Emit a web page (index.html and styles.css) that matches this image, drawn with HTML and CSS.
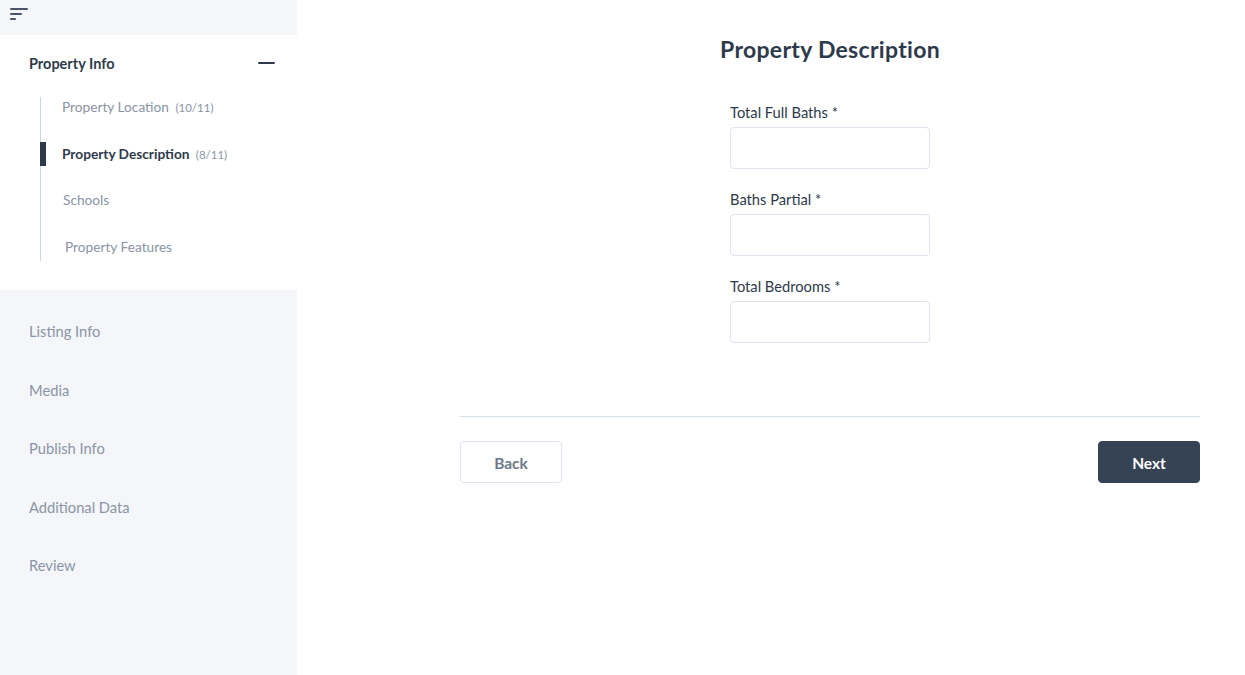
FILE: index.html
```html
<!DOCTYPE html>
<html lang="en">
<head>
<meta charset="utf-8">
<title>Property Description</title>
<link rel="stylesheet" href="styles.css">
</head>
<body>
<div class="app">
  <aside class="sidebar">
    <div class="topbar">
      <svg class="menu-icon" width="20" height="14" viewBox="0 0 20 14">
        <rect x="0" y="1" width="18" height="2" rx="1" fill="#4a5568"/>
        <rect x="0" y="6" width="12" height="2" rx="1" fill="#4a5568"/>
        <rect x="0" y="11" width="6" height="2" rx="1" fill="#4a5568"/>
      </svg>
    </div>
    <div class="open-section">
      <div class="section-head">
        <span class="section-title">Property Info</span>
        <span class="minus"></span>
      </div>
      <ul class="sub-list">
        <li class="sub-item">Property Location <span class="count">(10/11)</span></li>
        <li class="sub-item active">Property Description <span class="count">(8/11)</span></li>
        <li class="sub-item schools">Schools</li>
        <li class="sub-item features">Property Features</li>
      </ul>
    </div>
    <ul class="main-nav">
      <li>Listing Info</li>
      <li>Media</li>
      <li>Publish Info</li>
      <li>Additional Data</li>
      <li>Review</li>
    </ul>
  </aside>
  <main class="content">
    <div class="container">
      <h1 class="page-title">Property Description</h1>
      <form class="form">
        <div class="field">
          <label class="label">Total Full Baths *</label>
          <input class="input" type="text">
        </div>
        <div class="field">
          <label class="label">Baths Partial *</label>
          <input class="input" type="text">
        </div>
        <div class="field">
          <label class="label">Total Bedrooms *</label>
          <input class="input" type="text">
        </div>
      </form>
      <div class="divider"></div>
      <div class="actions">
        <button class="btn btn-back" type="button">Back</button>
        <button class="btn btn-next" type="button">Next</button>
      </div>
    </div>
  </main>
</div>
</body>
</html>
```

FILE: styles.css
```css
* { box-sizing: border-box; }
html, body { margin: 0; padding: 0; height: 100%; }
body {
  font-family: "Lato", "Open Sans", sans-serif;
  color: #2e3a4b;
  background: #fff;
}
.app {
  display: flex;
  height: 675px;
}
.sidebar {
  width: 297px;
  flex: 0 0 297px;
  background: #f4f6fa;
  display: flex;
  flex-direction: column;
}
.topbar {
  height: 35px;
  padding: 7px 0 0 10px;
}
.menu-icon { display: block; }
.open-section {
  background: #fff;
  height: 255px;
  padding-top: 14px;
}
.section-head {
  display: flex;
  align-items: center;
  justify-content: space-between;
  height: 28px;
  padding: 0 22px 0 29px;
}
.section-title {
  font-size: 14.5px;
  font-weight: 700;
  color: #2e3a4b;
}
.minus {
  width: 17px;
  height: 2px;
  background: #2e3a4b;
  border-radius: 1px;
}
.sub-list {
  list-style: none;
  margin: 20px 0 0 40px;
  padding: 0 0 4px 21px;
  border-left: 1px solid #c9d8ea;
  display: flex;
  flex-direction: column;
  gap: 26.5px;
}
.sub-item {
  position: relative;
  height: 20px;
  line-height: 20px;
  font-size: 13.7px;
  color: #8a94a6;
}
.sub-item .count {
  font-size: 11.5px;
  margin-left: 3px;
}
.sub-item.active {
  color: #2e3a4b;
  font-weight: 700;
}
.sub-item.active .count {
  font-weight: 400;
  color: #8a94a6;
}
.sub-item.active::before {
  content: "";
  position: absolute;
  left: -22px;
  top: -2px;
  width: 6px;
  height: 24px;
  background: #2e3a4b;
}
.sub-item.schools { padding-left: 1px; }
.sub-item.features { padding-left: 3px; }
.main-nav {
  list-style: none;
  margin: 0;
  padding: 31px 0 0 29px;
  display: flex;
  flex-direction: column;
  gap: 38.5px;
}
.main-nav li {
  height: 20px;
  line-height: 20px;
  font-size: 14.7px;
  color: #8a94a6;
}
.content {
  flex: 1;
  padding: 34px 45px 0 163px;
}
.container {
  width: 740px;
}
.page-title {
  margin: 0;
  text-align: center;
  font-size: 23px;
  letter-spacing: 0.3px;
  line-height: 30px;
  font-weight: 700;
  color: #2e3a4b;
}
.form {
  width: 200px;
  margin: 38px auto 0;
  display: flex;
  flex-direction: column;
  gap: 20px;
}
.field {
  display: flex;
  flex-direction: column;
  gap: 5px;
}
.label {
  height: 20px;
  line-height: 20px;
  font-size: 14.7px;
  color: #2e3a4b;
}
.input {
  width: 200px;
  height: 42px;
  border: 1px solid #dde4ee;
  border-radius: 4px;
  background: #fff;
  font-family: inherit;
}
.divider {
  margin-top: 73px;
  height: 1px;
  background: #d5e1ea;
}
.actions {
  margin-top: 24px;
  display: flex;
  justify-content: space-between;
}
.btn {
  width: 102px;
  height: 42px;
  padding-top: 3px;
  border-radius: 4px;
  font-family: inherit;
  font-size: 15.5px;
  font-weight: 700;
}
.btn-back {
  background: #fff;
  border: 1px solid #dde6f0;
  color: #6e7889;
}
.btn-next {
  background: #364354;
  border: 1px solid #364354;
  color: #fff;
}
```
